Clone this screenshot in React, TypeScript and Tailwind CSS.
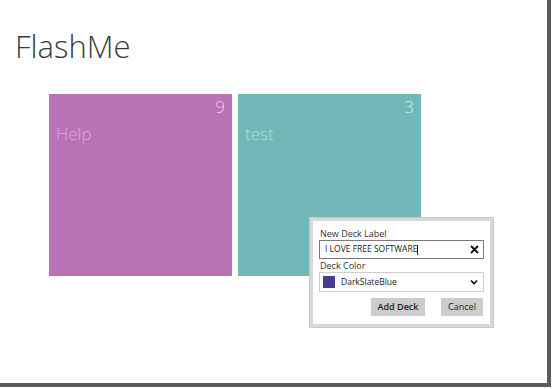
import React from "react";

export default function App() {
  const font = { fontFamily: '"Open Sans", "Noto Sans", sans-serif' };
  return (
    <div className="w-[552px] h-[389px] bg-white overflow-hidden" style={font}>
      <div className="relative w-[551px] h-[387px] bg-white border-r-4 border-b-4 border-[#5c5c5c]">
        <div className="pl-[15px] pt-[27px] text-[31px] leading-[38px] font-light text-[#3a3a3a]">
          FlashMe
        </div>
        <div className="flex gap-[6px] ml-[49px] mt-[29px]">
          <div className="w-[183px] h-[182px] bg-[#b872b6] flex flex-col px-[7px] pt-[2px]">
            <div className="text-right text-[17px] leading-[22px] font-light text-[#ecd0ec]">9</div>
            <div className="text-[17px] leading-[22px] font-light text-[#dcaadb] mt-[5px]">Help</div>
          </div>
          <div className="w-[183px] h-[182px] bg-[#73b8b8] flex flex-col px-[7px] pt-[2px]">
            <div className="text-right text-[17px] leading-[22px] font-light text-[#d4ecec]">3</div>
            <div className="text-[17px] leading-[22px] font-light text-[#b0dcdc] mt-[5px]">test</div>
          </div>
        </div>

        <div className="absolute left-[310px] top-[218px] w-[183px] h-[109px] bg-white border-[3px] border-[#d8d8d8] shadow-[0_0_0_1px_#c8c8c8] px-[6px] pt-[7px]">
          <div className="text-[9px] leading-[11px] text-[#333] pl-[1px]">New Deck Label</div>
          <div className="mt-[1px] h-[19px] border border-[#7a7a7a] flex items-center justify-between pl-[5px] pr-[4px]">
            <span className="text-[8.5px] text-[#222]">I LOVE FREE SOFTWARE<span className="inline-block w-px h-[10px] bg-[#222] align-middle"></span></span>
            <svg width="9" height="9" viewBox="0 0 9 9">
              <path d="M1 1 L8 8 M8 1 L1 8" stroke="#111" strokeWidth="1.8" />
            </svg>
          </div>
          <div className="mt-[1px] text-[9px] leading-[11px] text-[#333] pl-[1px]">Deck Color</div>
          <div className="mt-[1px] h-[20px] border border-[#cfcfcf] flex items-center justify-between pl-[3px] pr-[5px]">
            <div className="flex items-center gap-[6px]">
              <div className="w-[12px] h-[12px] bg-[#483d8b]"></div>
              <span className="text-[8.5px] text-[#222]">DarkSlateBlue</span>
            </div>
            <svg width="8" height="6" viewBox="0 0 8 6">
              <path d="M1 1.5 L4 4.5 L7 1.5" stroke="#111" strokeWidth="1.6" fill="none" />
            </svg>
          </div>
          <div className="flex justify-end gap-[16px] mt-[6px] pr-[1px]">
            <div className="w-[54px] h-[18px] bg-[#cccccc] flex items-center justify-center text-[9px] font-semibold text-[#222]">Add Deck</div>
            <div className="w-[42px] h-[18px] bg-[#cccccc] flex items-center justify-center text-[9px] text-[#222]">Cancel</div>
          </div>
        </div>
      </div>
    </div>
  );
}
